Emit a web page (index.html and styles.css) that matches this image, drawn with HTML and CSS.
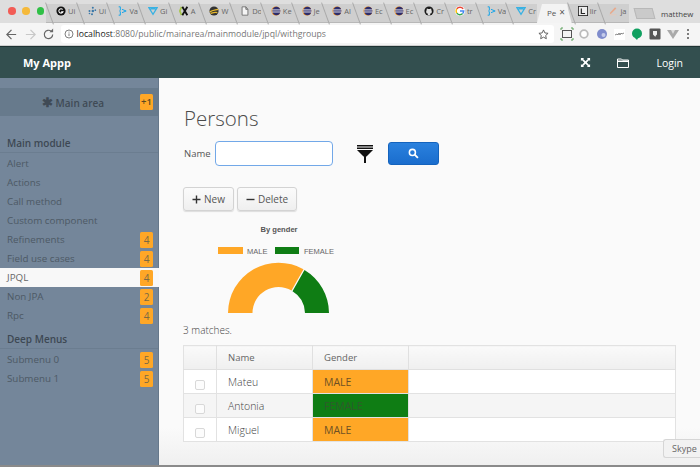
FILE: index.html
```html
<!DOCTYPE html>
<html lang="en">
<head>
<meta charset="utf-8">
<title>Persons</title>
<link rel="stylesheet" href="styles.css">
</head>
<body>
<div class="window">
  <div class="tabstrip">
    <div class="lights"><i class="light red"></i><i class="light yellow"></i><i class="light green"></i></div>
    <div class="tab"><svg class="fav" viewBox="0 0 12 12"><circle cx="6" cy="6" r="5.5" fill="#111"/><path d="M8 4.2A2.6 2.6 0 1 0 8.4 7H6.2" fill="none" stroke="#fff" stroke-width="1.3"/></svg><span>Ui</span></div>
    <div class="tab"><svg class="fav" viewBox="0 0 12 12"><g fill="#3b78a8"><circle cx="7" cy="2" r="1.2"/><circle cx="3" cy="6" r="1.2"/><circle cx="7" cy="6" r="1.5"/><circle cx="10" cy="5" r="1"/><circle cx="6" cy="10" r="1.2"/><circle cx="3" cy="9" r="1"/></g></svg><span>Ui</span></div>
    <div class="tab"><svg class="fav" viewBox="0 0 12 12"><path d="M2 1h2v4l-1 1 1 1v4H2M6 4l5 2-5 2" fill="none" stroke="#19a5e8" stroke-width="1.2"/></svg><span>Va</span></div>
    <div class="tab"><svg class="fav" viewBox="0 0 12 12"><path d="M1 2h10L6 10zM3 3.5h6" fill="none" stroke="#37b1e3" stroke-width="1.5"/></svg><span>Gi</span></div>
    <div class="tab"><svg class="fav" viewBox="0 0 12 12"><path d="M3 1L1 6l2 5" fill="none" stroke="#a8c64c" stroke-width="2"/><path d="M4 1l6 10M10 1L4 11" stroke="#111" stroke-width="2.2"/></svg><span>A</span></div>
    <div class="tab"><svg class="fav" viewBox="0 0 12 12"><circle cx="6" cy="6" r="5.5" fill="#333"/><path d="M1 7c3-2 6-2 10-3M2 9c3-1 5-2 8-1" stroke="#e8b92c" stroke-width="1.6" fill="none"/></svg><span>W</span></div>
    <div class="tab"><svg class="fav" viewBox="0 0 12 12"><path d="M2.500 1H7l2.500 3v7h-7zM7 1v3h2.500" fill="#f4f4f4" stroke="#666"/></svg><span>Do</span></div>
    <div class="tab"><svg class="fav" viewBox="0 0 12 12"><use href="#eclipse"/></svg><span>Ke</span></div>
    <div class="tab"><svg class="fav" viewBox="0 0 12 12"><use href="#eclipse"/></svg><span>Je</span></div>
    <div class="tab"><svg class="fav" viewBox="0 0 12 12"><use href="#eclipse"/></svg><span>Al</span></div>
    <div class="tab"><svg class="fav" viewBox="0 0 12 12"><use href="#eclipse"/></svg><span>Ec</span></div>
    <div class="tab"><svg class="fav" viewBox="0 0 12 12"><use href="#eclipse"/></svg><span>Ec</span></div>
    <div class="tab"><svg class="fav" viewBox="0 0 12 12"><circle cx="6" cy="6" r="5.500" fill="#1a1a1a"/><path d="M4.600 11V9C3 9 2.600 8 2.600 6.500 2.600 5.800 3 5 3.200 4.700 3.200 4 3.200 3.500 3.500 3c.6 0 1.100.4 1.500.7a4 4 0 0 1 2 0C7.400 3.400 7.900 3 8.500 3c.3.500.3 1 .3 1.700.2.300.6 1.100.6 1.800C9.400 8 9 9 7.400 9v2z" fill="#ddd"/></svg><span>Cr</span></div>
    <div class="tab"><svg class="fav" viewBox="0 0 12 12"><circle cx="6" cy="6" r="6" fill="#fff"/><path d="M9.800 3.600A4.500 4.500 0 0 0 2.200 3.500" fill="none" stroke="#ea4335" stroke-width="1.700"/><path d="M2.200 3.500a4.500 4.500 0 0 0 0 5" fill="none" stroke="#fbbc05" stroke-width="1.700"/><path d="M2.200 8.500a4.500 4.500 0 0 0 7 .5" fill="none" stroke="#34a853" stroke-width="1.700"/><path d="M9.200 9A4.500 4.500 0 0 0 10.500 6H6" fill="none" stroke="#4285f4" stroke-width="1.700"/></svg><span>tr</span></div>
    <div class="tab"><svg class="fav" viewBox="0 0 12 12"><path d="M2 1h2v4l-1 1 1 1v4H2M6 4l5 2-5 2" fill="none" stroke="#19a5e8" stroke-width="1.200"/></svg><span>Va</span></div>
    <div class="tab"><svg class="fav" viewBox="0 0 12 12"><path d="M1 2h10L6 10zM3 3.500h6" fill="none" stroke="#37b1e3" stroke-width="1.500"/></svg><span>Cr</span></div>
    <div class="tab tab-active"><span>Pe</span><span class="tab-close">×</span></div>
    <div class="tab"><svg class="fav" viewBox="0 0 12 12"><rect x="0.500" y="0.500" width="11" height="11" fill="#eee" stroke="#222"/><path d="M4 3v6h4.500" fill="none" stroke="#222" stroke-width="1.400"/></svg><span>lir</span></div>
    <div class="tab"><svg class="fav" viewBox="0 0 12 12"><path d="M2 10l2-1 6-6-1.500-1.500L3 7.500z" fill="#e8a88a"/><path d="M2 10.500h8" stroke="#e8c8b8"/></svg><span>ja</span></div>
    <div class="newtab"></div>
    <div class="profile">matthew</div>
  </div>
  <div class="toolbar">
    <svg class="navicon" viewBox="0 0 14 14"><path d="M12 7H2.500M7 2L2 7l5 5" fill="none" stroke="#666" stroke-width="1.300"/></svg>
    <svg class="navicon" viewBox="0 0 14 14"><path d="M2 7h9.500M7 2l5 5-5 5" fill="none" stroke="#c8c8c8" stroke-width="1.300"/></svg>
    <svg class="navicon" viewBox="0 0 14 14"><path d="M11.500 7A4.500 4.500 0 1 1 10 3.600" fill="none" stroke="#666" stroke-width="1.300"/><path d="M8 4.500h4v-4z" fill="#666"/></svg>
    <div class="omnibox">
      <svg class="info" viewBox="0 0 12 12"><circle cx="6" cy="6" r="4.800" fill="none" stroke="#666"/><path d="M6 5.300v3.200M6 3.200v1.100" stroke="#666"/></svg>
      <span class="url"><b>localhost</b>:8080/public/mainarea/mainmodule/jpql/withgroups</span>
      <svg class="star" viewBox="0 0 12 12"><path d="M6 1l1.500 3.300 3.500.4-2.600 2.400.7 3.500L6 8.900l-3.100 1.700.7-3.500L1 4.700l3.500-.4z" fill="none" stroke="#555"/></svg>
    </div>
    <div class="exts">
      <svg class="ext" viewBox="0 0 14 14"><rect x="2.500" y="3.500" width="9" height="7" fill="#f4f4f4" stroke="#555"/><path d="M1 3V1h2M11 1h2v2M13 11v2h-2M3 13H1v-2" fill="none" stroke="#5aa05a"/></svg>
      <svg class="ext" viewBox="0 0 14 14"><circle cx="7" cy="7" r="3.800" fill="#fff" stroke="#bbb" stroke-width="1.800"/></svg>
      <svg class="ext" viewBox="0 0 14 14"><circle cx="7" cy="7" r="5" fill="#7f8ccc"/><circle cx="8.500" cy="8" r="2" fill="#c4cbea"/></svg>
      <svg class="ext" viewBox="0 0 14 14"><rect x="1" y="2" width="11" height="11" fill="#fff"/><path d="M2 8l2-1 1 1 1-2 1 2 1-2 1 1 2-1" fill="none" stroke="#888"/></svg>
      <svg class="ext" viewBox="0 0 14 14"><circle cx="7" cy="6.500" r="5" fill="#10a060"/><path d="M5 11l3 0-1 2z" fill="#10a060"/></svg>
      <svg class="ext" viewBox="0 0 14 14"><rect x="1.500" y="1.500" width="11" height="11" rx="1" fill="#555"/><path d="M5 4h4v3.500L7.500 9V10L6.500 9 5 7.500z" fill="#eee"/></svg>
      <svg class="ext" viewBox="0 0 14 14"><path d="M1 3h12L7 12z" fill="#a9a9a9"/><path d="M5 3h4L7 7z" fill="#dcdcdc"/></svg>
      <svg class="menu" viewBox="0 0 4 14"><g fill="#555"><circle cx="2" cy="3" r="1"/><circle cx="2" cy="7" r="1"/><circle cx="2" cy="11" r="1"/></g></svg>
    </div>
  </div>
  <header class="appbar">
    <span class="brand">My Appp</span>
    <div class="appbar-actions">
      <svg class="bar-icon expand" viewBox="0 0 12 12"><path d="M1 1h3.500L3.400 2.100 6 4.600l2.600-2.500L7.500 1H11v3.500L9.900 3.400 7.400 6l2.500 2.600L11 7.500V11H7.500l1.100-1.100L6 7.400 3.400 9.900 4.500 11H1V7.500l1.100 1.100L4.600 6 2.100 3.400 1 4.500z" fill="#fff"/></svg>
      <svg class="bar-icon folder" viewBox="0 0 12 12"><path d="M.5 2h4l1 1h6v7.500H.5z" fill="none" stroke="#fff"/><path d="M1 3.500h10v1.500H1z" fill="#fff"/></svg>
      <span class="login">Login</span>
    </div>
  </header>
  <div class="app">
    <nav class="sidebar">
      <div class="area"><span class="area-label"><span class="asterisk">✱</span> Main area</span><span class="badge strong">+1</span></div>
      <div class="section">Main module</div>
      <div class="item">Alert</div>
      <div class="item">Actions</div>
      <div class="item">Call method</div>
      <div class="item">Custom component</div>
      <div class="item">Refinements<span class="badge">4</span></div>
      <div class="item">Field use cases<span class="badge">4</span></div>
      <div class="item selected">JPQL<span class="badge">4</span></div>
      <div class="item">Non JPA<span class="badge">2</span></div>
      <div class="item">Rpc<span class="badge">4</span></div>
      <div class="section deep">Deep Menus</div>
      <div class="item">Submenu 0<span class="badge">5</span></div>
      <div class="item">Submenu 1<span class="badge">5</span></div>
    </nav>
    <main class="content">
      <h1 class="title">Persons</h1>
      <div class="filter">
        <label class="name-label">Name</label>
        <input class="name-input" type="text">
        <svg class="funnel" viewBox="0 0 16 18"><path d="M0 0h16v1.500H0zM0 2.500h16V4H0z" fill="#111"/><path d="M0 5h16l-6.500 6.500H6.500z" fill="#111"/><path d="M7 11h2v7H7z" fill="#111"/></svg>
        <button class="search" type="button"><svg class="search-icon" viewBox="0 0 12 12"><circle cx="4.800" cy="4.800" r="3.300" fill="none" stroke="#fff" stroke-width="1.700"/><path d="M7.300 7.300l3.500 3.500" stroke="#fff" stroke-width="2"/></svg></button>
      </div>
      <div class="actions">
        <button class="btn" type="button"><svg class="btn-icon" viewBox="0 0 9 9"><path d="M4.500 .5v8M.5 4.500h8" stroke="#333" stroke-width="1.400"/></svg>New</button>
        <button class="btn" type="button"><svg class="btn-icon" viewBox="0 0 9 9"><path d="M.5 4.500h8" stroke="#333" stroke-width="1.400"/></svg>Delete</button>
      </div>
      <svg class="chart" width="160" height="93" viewBox="0 0 160 93">
        <text class="chart-title" x="81" y="9" text-anchor="middle">By gender</text>
        <rect x="20" y="24" width="25" height="7" fill="#ffa726"/>
        <text class="chart-legend" x="49" y="31">MALE</text>
        <rect x="77" y="24" width="24" height="7" fill="#0f7d14"/>
        <text class="chart-legend" x="106" y="31">FEMALE</text>
        <path d="M30 90A50.500 50.500 0 0 1 105.500 46.300L93.500 67.500A26 26 0 0 0 54.500 90z" fill="#ffa726"/>
        <path d="M106.500 47A50.500 50.500 0 0 1 131 90H107A26 26 0 0 0 94.500 68.200z" fill="#0f7d14"/>
      </svg>
      <p class="matches">3 matches.</p>
      <table class="grid">
        <thead>
          <tr><th class="col-check"></th><th class="col-name">Name</th><th class="col-gender">Gender</th><th></th></tr>
        </thead>
        <tbody>
          <tr><td class="check-cell"><span class="check"></span></td><td>Mateu</td><td class="male">MALE</td><td></td></tr>
          <tr class="odd"><td class="check-cell"><span class="check"></span></td><td>Antonia</td><td class="female">FEMALE</td><td></td></tr>
          <tr><td class="check-cell"><span class="check"></span></td><td>Miguel</td><td class="male">MALE</td><td></td></tr>
        </tbody>
      </table>
      <div class="skype">Skype</div>
    </main>
  </div>
</div>
<svg class="defs" width="0" height="0"><defs><g id="eclipse"><circle cx="6" cy="6" r="5.500" fill="#e88a1c"/><circle cx="6.500" cy="6" r="5" fill="#2c2c6c"/><path d="M1 4.700h11M1 7.200h11" stroke="#fff" stroke-width="1"/></g></defs></svg>
</body>
</html>
```

FILE: styles.css
```css
* { box-sizing: border-box; }
html, body { margin: 0; padding: 0; height: 100%; overflow: hidden; }
body { font-family: "Open Sans", "Liberation Sans", sans-serif; color: #444; background: #fff; }
.defs { position: absolute; }
.window { display: flex; flex-direction: column; width: 700px; height: 467px; overflow: hidden; }

.tabstrip { display: flex; align-items: flex-end; height: 23px; flex: none; background: #dedede; padding-top: 4px; }
.lights { display: flex; gap: 6.800px; width: 46px; flex: none; align-self: flex-start; padding: 3px 0 0 8px; }
.light { width: 7.500px; height: 7.500px; border-radius: 50%; }
.red { background: #f25c55; }
.yellow { background: #f5b93a; }
.green { background: #2fc046; }
.tab { position: relative; display: flex; align-items: center; gap: 2px; width: 30.700px; height: 19px; padding: 0 0 4px 10px; flex: none; font-size: 7.500px; color: #666; background: #cfcfcf; border-bottom: 1px solid #b8b8b8; white-space: nowrap; }
.tab::before { content: ""; position: absolute; left: 3px; top: -2px; height: 23px; border-left: 1px solid #a9a9a9; transform: rotate(-20deg); }
.fav { width: 10px; height: 10px; flex: none; }
.tab-active { z-index: 2; width: 34.700px; margin-right: -4px; background: #f3f3f3; border-bottom: none; color: #555; padding: 0 0 3px 10px; font-size: 8px; clip-path: polygon(5px 0, calc(100% - 5px) 0, 100% 100%, 0 100%); }
.tab-active::before { display: none; }
.tab-close { font-size: 10px; margin-left: 1px; }
.newtab { width: 19px; height: 11px; margin: 0 0 4px 6px; background: #cacaca; border: 1px solid #b8b8b8; transform: skewX(15deg); flex: none; }
.profile { font-size: 7.800px; color: #444; margin: 0 0 6px 7px; align-self: flex-start; padding-top: 5px; }

.toolbar { display: flex; align-items: center; height: 23px; flex: none; background: #f5f5f5; padding-left: 5px; border-bottom: 1px solid #d0d0d0; }
.navicon { width: 13px; height: 13px; margin-right: 5.500px; flex: none; }
.omnibox { display: flex; align-items: center; width: 493px; height: 18px; flex: none; background: #fff; border-radius: 3px; padding: 0 5px 0 3.500px; }
.info { width: 10px; height: 10px; flex: none; margin-right: 2.500px; }
.url { flex: 1; font-size: 8.700px; color: #777; white-space: nowrap; }
.url b { font-weight: 400; color: #222; }
.star { width: 11px; height: 11px; flex: none; }
.exts { display: flex; align-items: center; gap: 3.700px; margin-left: 6px; }
.ext { width: 14px; height: 14px; flex: none; }
.menu { width: 4px; height: 14px; margin-left: 3px; flex: none; }

.appbar { display: flex; align-items: center; justify-content: space-between; height: 32px; flex: none; background: #334f4f; border-top: 1px solid #1e3333; padding: 0 17px 0 23px; color: #fff; }
.brand { font-size: 11px; font-weight: 700; }
.appbar-actions { display: flex; align-items: center; }
.bar-icon { width: 12px; height: 12px; flex: none; }
.expand { width: 11px; height: 11px; }
.folder { margin-left: 26px; }
.login { font-size: 10.500px; margin-left: 27px; }

.app { display: flex; flex: 1; min-height: 0; border-bottom: 2px solid #8a8a8a; }
.sidebar { width: 159px; flex: none; background: #74869a; padding-top: 10px; color: #4d5965; font-size: 9.800px; border-right: 1px solid #66788b; }
.area { position: relative; display: flex; align-items: center; justify-content: center; height: 28px; background: #677a8c; font-weight: 600; font-size: 10px; color: #3f4a55; margin-bottom: 17px; padding-right: 12px; }
.asterisk { font-size: 13px; }
.badge { position: absolute; right: 5px; top: 1.500px; width: 13px; height: 16px; background: #ffa726; border-radius: 1.500px; color: #7a6a45; font-size: 10px; font-weight: 400; text-align: center; line-height: 16px; }
.area .badge { top: 6px; }
.badge.strong { color: #5b4a22; font-weight: 600; font-size: 9.500px; }
.section { height: 20px; font-weight: 600; font-size: 10px; color: #3d4853; padding: 1px 0 0 7px; line-height: 18px; border-bottom: 1px solid #6b7d90; margin-bottom: 1px; }
.section.deep { margin-top: 4px; }
.item { position: relative; height: 19px; line-height: 19px; padding-left: 7px; }
.selected { background: #f8f8f8; color: #666; margin-right: -1px; }
.selected .badge { right: 6px; }

.content { position: relative; flex: 1; min-width: 0; padding: 26px 24px 0 25px; background: linear-gradient(#fafafa 350px, #f0f0f0 386px); overflow: hidden; }
.title { margin: 0; font-size: 20.500px; font-weight: 300; line-height: 28px; color: #4a4a4a; }
.filter { display: flex; align-items: center; margin-top: 9px; }
.name-label { width: 31px; font-size: 9.500px; color: #555; flex: none; }
.name-input { width: 118px; height: 25px; border: 1.500px solid #72a8e8; border-radius: 4px; background: #fff; flex: none; outline: none; }
.funnel { width: 16px; height: 18px; margin-left: 24px; flex: none; }
.search { display: flex; align-items: center; justify-content: center; width: 51px; height: 23px; margin-left: 15px; border: 1px solid #1463bd; border-radius: 3px; background: linear-gradient(#2a81de, #1a6dcd); padding: 0; flex: none; }
.search-icon { width: 11px; height: 11px; }
.actions { display: flex; gap: 3px; margin: 21px 0 0 -1px; }
.btn { display: flex; align-items: center; justify-content: center; gap: 3px; height: 24px; padding: 0 8px; border: 1px solid #d3d3d3; border-radius: 3px; background: linear-gradient(#fbfbfb, #efefef); box-shadow: 0 1px 1px #ddd; font: 400 10px "Open Sans", sans-serif; color: #555; }
.btn-icon { width: 9px; height: 9px; }
.chart { display: block; margin: 12px 0 0 14px; }
.chart-title { font: 700 7.600px "Liberation Sans", sans-serif; fill: #555; }
.chart-legend { font: 400 7.500px "Liberation Sans", sans-serif; fill: #666; }
.matches { margin: 6px 0 0 -1px; font-size: 10px; font-weight: 300; line-height: 16px; color: #444; }
.grid { width: 493px; margin: 7px 0 0 -1px; border-collapse: collapse; table-layout: fixed; font-size: 10.500px; font-weight: 300; color: #3f3f3f; background: #fff; border: 1px solid #e2e2e2; }
.grid th { height: 24px; padding: 0 0 0 11px; background: linear-gradient(#fafafa, #efefef); border-right: 1px solid #e0e0e0; border-bottom: 1px solid #e0e0e0; font-size: 9.500px; font-weight: 400; text-align: left; color: #666; }
.grid td { height: 24px; padding: 0 0 0 11px; border-top: 1px solid #e2e2e2; border-right: 1px solid #e2e2e2; }
.col-check { width: 33px; }
.col-name { width: 96px; }
.col-gender { width: 96px; }
.odd td { background: #f5f5f5; }
.grid td.check-cell { padding: 7px 0 0 11px; }
.check { display: block; width: 10px; height: 10px; border: 1px solid #d8d8d8; border-radius: 2px; background: #fcfcfc; }
.grid td.male { background: #ffa726; color: #6e5024; font-weight: 400; }
.grid td.female { background: #0f7d14; color: #2f5a2c; font-weight: 400; }
.skype { position: absolute; right: 0; bottom: 7px; width: 37px; height: 19px; padding-left: 8px; font-size: 9px; line-height: 18px; color: #666; background: #f2f2f2; border: 1px solid #d6d6d6; border-right: none; border-radius: 3px 0 0 3px; }
```
